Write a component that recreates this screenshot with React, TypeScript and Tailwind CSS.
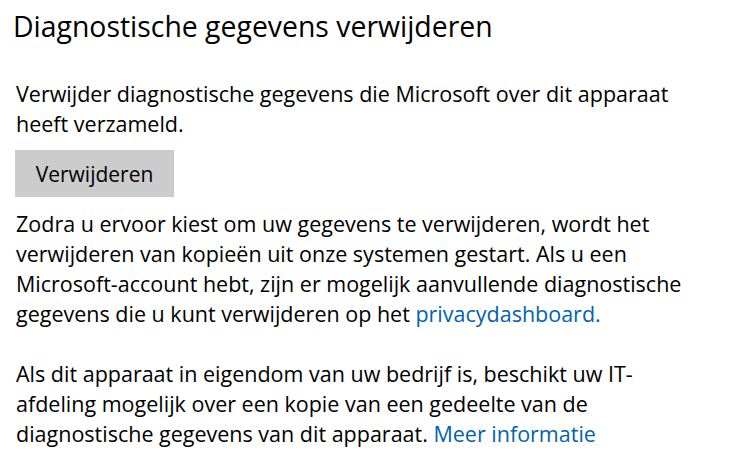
export default function App() {
  return (
    <div className="min-h-[472px] bg-white text-black font-['Open_Sans',sans-serif]">
      <div className="pl-[16px] pt-[7px]">
        <h1 className="-ml-[3px] text-[28.4px] leading-[38px] font-normal whitespace-nowrap">
          Diagnostische gegevens verwijderen
        </h1>

        <p className="mt-[34px] text-[21.5px] leading-[30px] whitespace-nowrap">
          Verwijder diagnostische gegevens die Microsoft over dit apparaat
          <br />
          heeft verzameld.
        </p>

        <button className="-ml-px mt-[11px] flex h-[47px] w-[159px] items-center justify-center bg-[#cccccc] text-[21px] leading-[30px] text-black">
          Verwijderen
        </button>

        <p className="mt-[12px] text-[21.5px] leading-[30px] whitespace-nowrap">
          Zodra u ervoor kiest om uw gegevens te verwijderen, wordt het
          <br />
          verwijderen van kopieën uit onze systemen gestart. Als u een
          <br />
          Microsoft-account hebt, zijn er mogelijk aanvullende diagnostische
          <br />
          gegevens die u kunt verwijderen op het{" "}
          <a href="#" className="text-[#0063b1]">
            privacydashboard.
          </a>
        </p>

        <p className="mt-[30px] text-[21.5px] leading-[30px] whitespace-nowrap">
          Als dit apparaat in eigendom van uw bedrijf is, beschikt uw IT-
          <br />
          afdeling mogelijk over een kopie van een gedeelte van de
          <br />
          diagnostische gegevens van dit apparaat.{" "}
          <a href="#" className="text-[#0063b1]">
            Meer informatie
          </a>
        </p>
      </div>
    </div>
  );
}
